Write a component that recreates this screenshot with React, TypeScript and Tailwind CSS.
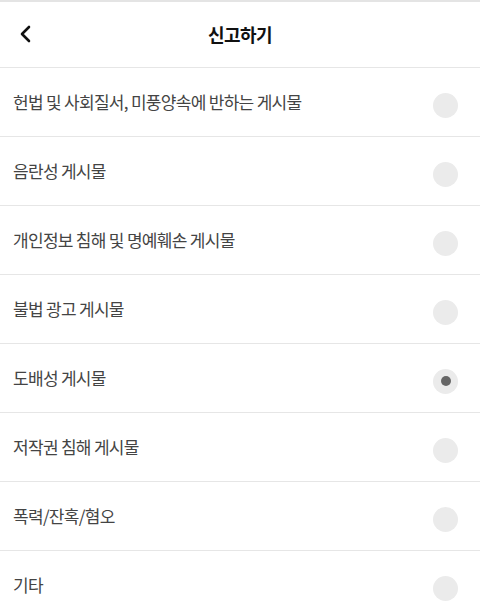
import React, { useState } from 'react';

const reasons = [
  '헌법 및 사회질서, 미풍양속에 반하는 게시물',
  '음란성 게시물',
  '개인정보 침해 및 명예훼손 게시물',
  '불법 광고 게시물',
  '도배성 게시물',
  '저작권 침해 게시물',
  '폭력/잔혹/혐오',
  '기타',
];

export default function App() {
  const [selected, setSelected] = useState(4);

  return (
    <div className="w-[480px] h-[604px] overflow-hidden bg-white border-t-2 border-[#e4e4e4] font-['Noto_Sans_CJK_KR','Noto_Sans',sans-serif]">
      <header className="relative flex h-[66px] items-center justify-center border-b border-[#e6e6e6]">
        <button className="absolute left-[18px] top-[22px] text-[#111]">
          <svg width="16" height="20" viewBox="0 0 16 20" fill="none">
            <path d="M11 3 L4 10 L11 17" stroke="currentColor" strokeWidth="2.6" strokeLinecap="round" strokeLinejoin="round" />
          </svg>
        </button>
        <h1 className="text-[18px] font-bold tracking-[-0.5px] text-[#111]">신고하기</h1>
      </header>

      <ul>
        {reasons.map((r, i) => (
          <li
            key={r}
            onClick={() => setSelected(i)}
            className="flex h-[69px] items-center justify-between border-b border-[#e6e6e6] pl-[13px] pr-[22px]"
          >
            <span className="text-[17px] tracking-[-0.7px] text-[#444]">{r}</span>
            <span className="mt-[6px] flex h-[25px] w-[25px] items-center justify-center rounded-full bg-[#ebebeb]">
              {selected === i && <span className="h-[10px] w-[10px] rounded-full bg-[#666]" />}
            </span>
          </li>
        ))}
      </ul>
    </div>
  );
}
